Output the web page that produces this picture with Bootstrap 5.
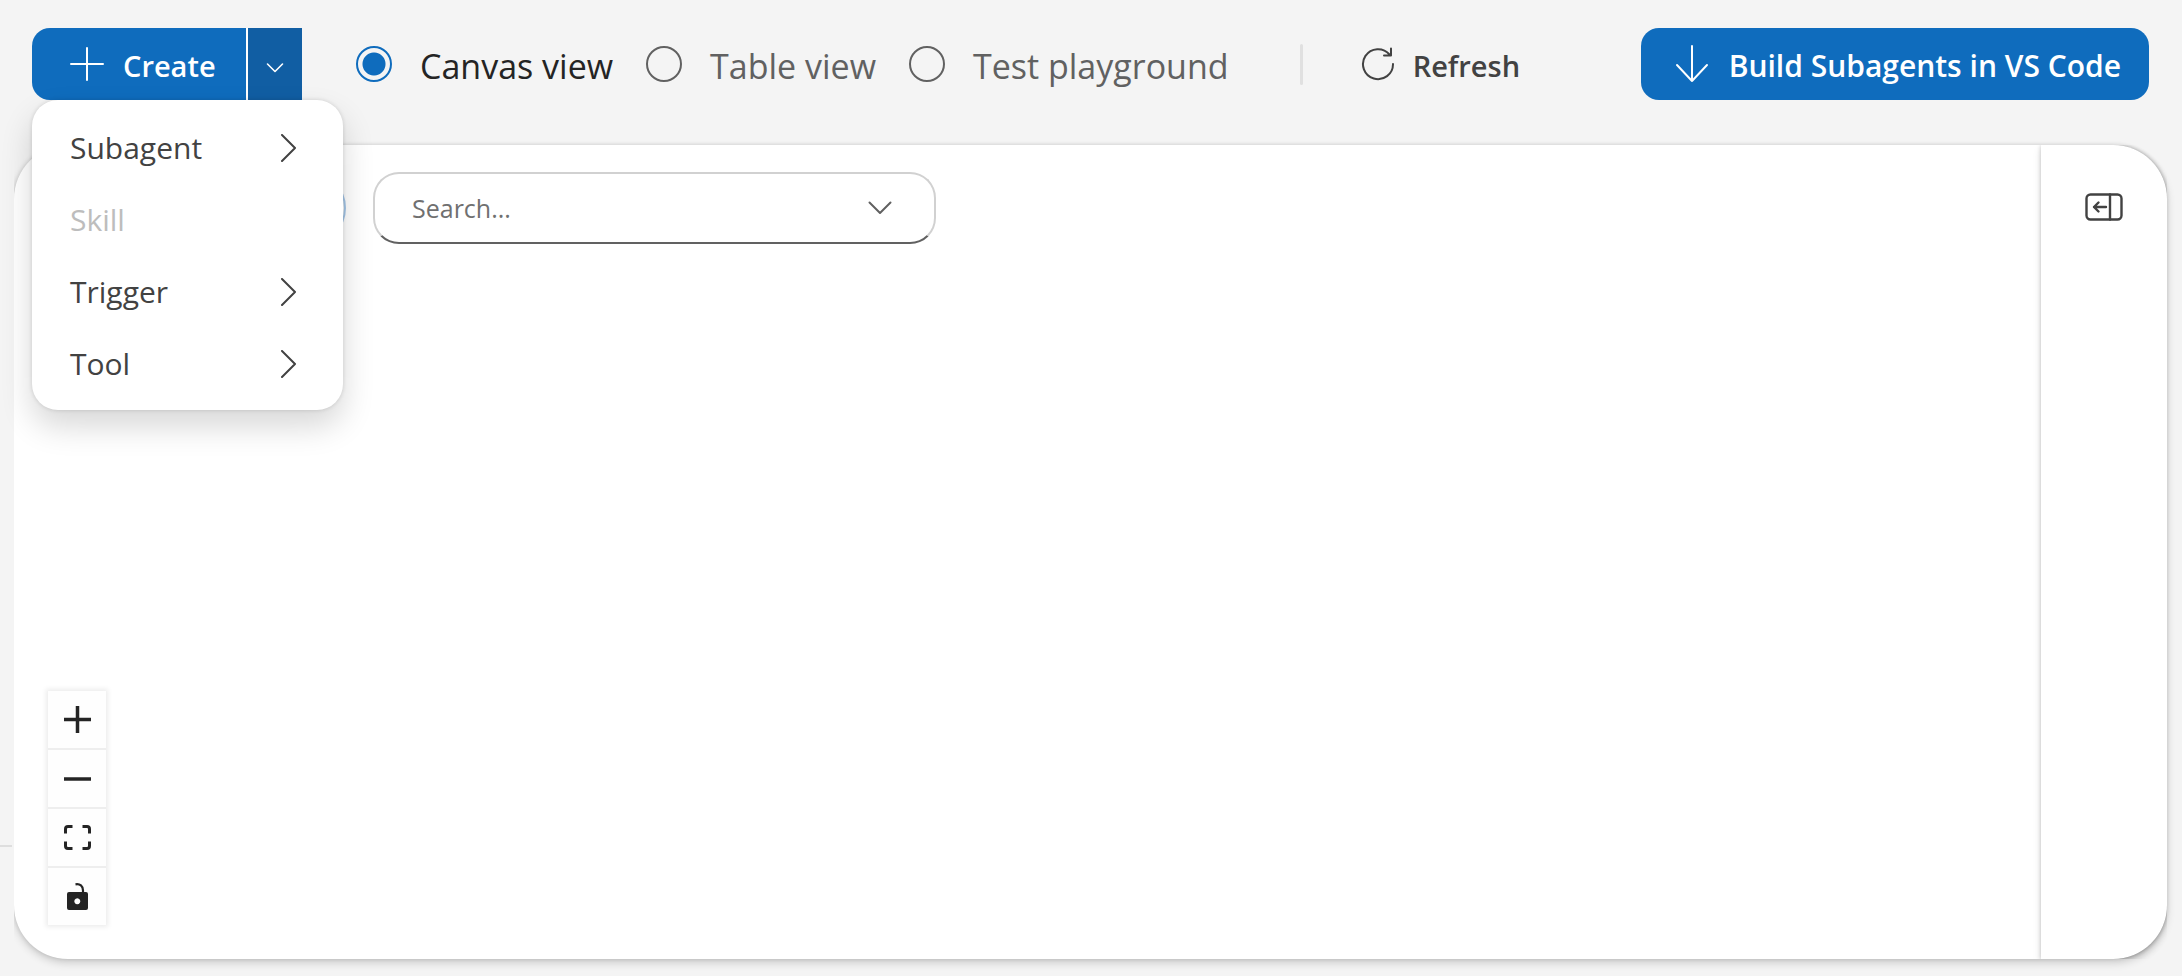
<!DOCTYPE html>
<html lang="en">
<head>
<meta charset="utf-8">
<meta name="viewport" content="width=device-width, initial-scale=1">
<title>Canvas view</title>
<link href="https://cdn.jsdelivr.net/npm/bootstrap@5.3.0/dist/css/bootstrap.min.css" rel="stylesheet">
<style>
  :root { --brand: #0f6cbd; --brand-dark: #115ea3; --ink: #242424; --ink-2: #424242; --ink-3: #616161; --page: #f4f4f4; }
  body { background: var(--page); color: var(--ink-2); font-family: "Open Sans", "Noto Sans", sans-serif; font-size: 30px; line-height: 40px; }
  svg { display: block; flex: none; }
  .rail { width: 14px; background: var(--page); z-index: 1; }
  .rail-line { height: 2px; margin: 0 2px 129px 0; background: #dedede; }
  .topbar { padding: 28px 33px 45px 18px; }
  .app-btn { height: 72px; border: 0; border-radius: 18px; font-size: 29px; line-height: 40px; font-weight: 600; padding: 0 28px; --bs-btn-color: #fff; --bs-btn-bg: var(--brand); --bs-btn-hover-bg: var(--brand-dark); }
  .app-btn span, .view-choice label { padding-top: 3px; }
  .create-main { width: 215px; padding: 0 0 0 38px; gap: 19px; }
  .create-group > .create-more { width: 56px; padding: 0; border-left: 2px solid #fff; border-radius: 0 18px 18px 0; --bs-btn-bg: var(--brand-dark); }
  .create-group .dropdown-menu { top: 100%; left: 0; width: 311px; padding: 12px 0 10px; border: 0; border-radius: 26px; box-shadow: 0 0 4px rgba(0,0,0,.14), 0 16px 32px rgba(0,0,0,.16); }
  .create-group .dropdown-item { height: 72px; padding: 0 46px 0 38px; font-size: 30px; color: var(--ink-2); }
  .create-group .dropdown-item:disabled { color: #bdbdbd; }
  .views { margin-left: 54px; gap: 33px; }
  .view-choice { gap: 28px; min-height: 0; padding: 0; margin: 0; font-size: 34px; color: var(--ink-3); }
  .view-choice .form-check-input { width: 36px; height: 36px; margin: 0; float: none; border: 2px solid var(--ink-3); background: transparent; }
  .view-choice .form-check-input:checked { border-color: var(--brand); background: radial-gradient(circle, var(--brand) 11px, transparent 12px); }
  .view-choice .form-check-input:checked + label { color: var(--ink); }
  .divider { width: 3px; height: 41px; margin: 0 58px 0 71px; background: #e0e0e0; border-radius: 2px; }
  .refresh { gap: 18px; padding: 0; --bs-btn-color: var(--ink-2); --bs-btn-bg: transparent; --bs-btn-hover-bg: transparent; --bs-btn-hover-color: var(--ink); }
  .build { gap: 20px; padding: 0 28px 0 34px; font-size: 30px; }
  .board { margin: 0 15px 17px 0; background: #fff; border-radius: 54px; box-shadow: 0 0 4px rgba(0,0,0,.14), 0 4px 8px rgba(0,0,0,.16); }
  .board-main { padding: 27px 34px 34px; }
  .filter-btn { width: 298px; height: 72px; border: 2px solid #a6c8ea; border-radius: 36px; background: #fff; }
  .search { width: 563px; height: 72px; margin-left: 27px; border: 2px solid #d1d1d1; border-bottom-color: var(--ink-3); border-radius: 26px; padding: 0 42px 0 37px; color: var(--ink-3); }
  .search input { min-width: 0; font-size: 25px; line-height: 40px; color: var(--ink); outline: 0; }
  .search input::placeholder { color: #707070; opacity: 1; }
  .board-side { width: 126px; padding-top: 45px; border-radius: 0 54px 54px 0; box-shadow: 0 0 4px rgba(0,0,0,.2), 0 4px 8px rgba(0,0,0,.12); clip-path: inset(0 0 0 -14px); }
  .zoom-bar { width: 58px; gap: 2px; background: #eee; box-shadow: 0 0 5px 2px rgba(0,0,0,.08); }
  .zoom-bar button { height: 57px; border: 0; padding: 0; background: #fefefe; color: var(--ink); }
  .stroke { fill: none; stroke: currentColor; stroke-width: 2; stroke-linecap: round; stroke-linejoin: round; }
</style>
</head>
<body>
<div class="d-flex min-vh-100">
  <aside class="rail position-relative d-flex flex-column justify-content-end flex-shrink-0"><div class="rail-line"></div></aside>

  <div class="d-flex flex-column flex-grow-1">
    <header class="topbar d-flex align-items-center">
      <div class="create-group btn-group dropdown">
        <button type="button" class="app-btn create-main btn d-flex align-items-center">
          <svg class="stroke" width="34" height="34" viewBox="0 0 34 34"><path d="M17 1v32M1 17h32"/></svg><span>Create</span>
        </button>
        <button type="button" class="app-btn create-more btn d-flex align-items-center justify-content-center" data-bs-toggle="dropdown" aria-expanded="true" aria-label="More create options">
          <svg class="stroke mt-2" width="18" height="12" viewBox="0 0 18 12"><path stroke-width="1.600" d="M1.500 2l7.500 7.500L16.500 2"/></svg>
        </button>
        <ul class="dropdown-menu show">
          <li><button type="button" class="dropdown-item d-flex align-items-center justify-content-between">Subagent <svg class="stroke" width="17" height="28" viewBox="0 0 17 28"><path d="M2 1l13 13L2 27"/></svg></button></li>
          <li><button type="button" class="dropdown-item d-flex align-items-center" disabled>Skill</button></li>
          <li><button type="button" class="dropdown-item d-flex align-items-center justify-content-between">Trigger <svg class="stroke" width="17" height="28" viewBox="0 0 17 28"><path d="M2 1l13 13L2 27"/></svg></button></li>
          <li><button type="button" class="dropdown-item d-flex align-items-center justify-content-between">Tool <svg class="stroke" width="17" height="28" viewBox="0 0 17 28"><path d="M2 1l13 13L2 27"/></svg></button></li>
        </ul>
      </div>

      <div class="views d-flex" role="radiogroup" aria-label="View">
        <div class="view-choice form-check d-flex align-items-center">
          <input class="form-check-input" type="radio" name="view" id="view-canvas" checked><label for="view-canvas">Canvas view</label>
        </div>
        <div class="view-choice form-check d-flex align-items-center">
          <input class="form-check-input" type="radio" name="view" id="view-table"><label for="view-table">Table view</label>
        </div>
        <div class="view-choice form-check d-flex align-items-center">
          <input class="form-check-input" type="radio" name="view" id="view-test"><label for="view-test">Test playground</label>
        </div>
      </div>

      <div class="divider"></div>
      <button type="button" class="app-btn refresh btn d-flex align-items-center">
        <svg class="stroke" width="34" height="34" viewBox="0 0 34 34"><path d="M32 17A15 15 0 1 1 28.500 7.500M30 1.500V8.500H23"/></svg><span>Refresh</span>
      </button>
      <button type="button" class="app-btn build btn d-flex align-items-center ms-auto">
        <svg class="stroke" width="34" height="38" viewBox="0 0 34 38"><path d="M17 1v35M2 20l15 16L32 20"/></svg><span>Build Subagents in VS Code</span>
      </button>
    </header>

    <main class="board d-flex flex-grow-1">
      <section class="board-main d-flex flex-column justify-content-between flex-grow-1" aria-label="Canvas">
        <div class="d-flex">
          <button type="button" class="filter-btn" aria-label="Filter"></button>
          <div class="search d-flex align-items-center">
            <input type="text" class="border-0 p-0 flex-grow-1 bg-transparent" placeholder="Search..." aria-label="Search">
            <svg class="stroke" width="24" height="14" viewBox="0 0 24 14"><path d="M1.500 1.500L12 12L22.500 1.500"/></svg>
          </div>
        </div>
        <div class="zoom-bar d-flex flex-column">
          <button type="button" class="d-flex align-items-center justify-content-center" aria-label="Zoom in"><svg width="27" height="27" viewBox="0 0 27 27"><path d="M0 13.500h27M13.500 0v27" stroke="currentColor" stroke-width="3.500"/></svg></button>
          <button type="button" class="d-flex align-items-center justify-content-center" aria-label="Zoom out"><svg width="27" height="4" viewBox="0 0 27 4"><path d="M0 2h27" stroke="currentColor" stroke-width="3.500"/></svg></button>
          <button type="button" class="d-flex align-items-center justify-content-center" aria-label="Fit view"><svg width="27" height="25" viewBox="0 0 27 25"><path d="M1.500 8.500V4Q1.500 1.500 4 1.500H8.500M18.500 1.500H23Q25.500 1.500 25.500 4V8.500M25.500 16.500V21Q25.500 23.500 23 23.500H18.500M8.500 23.500H4Q1.500 23.500 1.500 21V16.500" fill="none" stroke="currentColor" stroke-width="3"/></svg></button>
          <button type="button" class="d-flex align-items-center justify-content-center" aria-label="Unlock"><svg width="21" height="27" viewBox="0 0 21 27"><path d="M8.500 1.300C13 .5 16 3 16 7.500V10" fill="none" stroke="currentColor" stroke-width="2.200"/><path fill="currentColor" fill-rule="evenodd" d="M2 9h17q2 0 2 2v14q0 2-2 2H2q-2 0-2-2V11q0-2 2-2zM10.300 15.200a3 3 0 1 0 .01 0z"/></svg></button>
        </div>
      </section>
      <aside class="board-side d-flex justify-content-center align-items-start flex-shrink-0">
        <button type="button" class="btn border-0 p-0" aria-label="Open panel">
          <svg width="38" height="34" viewBox="0 0 38 34" fill="none" stroke="#424242" stroke-width="2.400" stroke-linecap="round" stroke-linejoin="round"><rect x="1.500" y="4.500" width="35" height="25" rx="4"/><path d="M25 4.500v25M21 17H9M13.500 12.500L9 17l4.500 4.500"/></svg>
        </button>
      </aside>
    </main>
  </div>
</div>
<script src="https://cdn.jsdelivr.net/npm/bootstrap@5.3.0/dist/js/bootstrap.bundle.min.js"></script>
</body>
</html>
